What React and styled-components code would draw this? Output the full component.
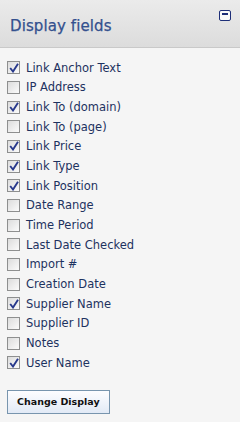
import React, { useState } from 'react';
import styled, { createGlobalStyle } from 'styled-components';

const GlobalStyle = createGlobalStyle`
  html, body {
    margin: 0;
    padding: 0;
    background: #f5f5f5;
  }
`;

const Panel = styled.div`
  width: 240px;
  min-height: 422px;
  background: #f5f5f5;
  font-family: "DejaVu Sans", Tahoma, sans-serif;
`;

const Header = styled.div`
  height: 47px;
  display: flex;
  align-items: flex-start;
  justify-content: space-between;
  padding: 0 9px 0 10px;
  background: linear-gradient(#ebebeb, #dcdcdc);
  border-bottom: 1px solid #c9c9c9;
  box-sizing: content-box;
`;

const Title = styled.h2`
  margin: 17px 0 0;
  font-size: 15px;
  font-weight: normal;
  color: #33508e;
  letter-spacing: 0.1px;
  -webkit-text-stroke: 0.25px #33508e;
`;

const Collapse = styled.button`
  margin-top: 10px;
  width: 12px;
  height: 11px;
  padding: 0;
  border: 1px solid #1e2f78;
  border-radius: 2px;
  background: #fafafa;
  display: flex;
  justify-content: center;
  cursor: pointer;

  &::after {
    content: '';
    margin-top: 2px;
    width: 6px;
    height: 2px;
    background: #1e2f78;
  }
`;

const List = styled.div`
  padding: 10px 0 0 7px;
  display: flex;
  flex-direction: column;
`;

const Row = styled.label`
  height: 19.67px;
  display: flex;
  align-items: center;
  gap: 6px;
  font-size: 11.5px;
  color: #1d3260;
  cursor: pointer;
`;

const Box = styled.span`
  width: 11px;
  height: 11px;
  border: 1px solid #8e8f8f;
  background: linear-gradient(135deg, #dcdcdc, #fbfbfb);
  display: flex;
  align-items: center;
  justify-content: center;
  flex-shrink: 0;
`;

const Button = styled.button`
  margin: 17px 0 0 7px;
  height: 24px;
  padding: 0 9px;
  border: 1px solid #7895ae;
  background: linear-gradient(#fdfdff, #e2eaf6);
  font-family: "DejaVu Sans", Tahoma, sans-serif;
  font-size: 9.5px;
  font-weight: bold;
  color: #111;
  cursor: pointer;
`;

const fields = [
  ['Link Anchor Text', true],
  ['IP Address', false],
  ['Link To (domain)', true],
  ['Link To (page)', false],
  ['Link Price', true],
  ['Link Type', true],
  ['Link Position', true],
  ['Date Range', false],
  ['Time Period', false],
  ['Last Date Checked', false],
  ['Import #', false],
  ['Creation Date', false],
  ['Supplier Name', true],
  ['Supplier ID', false],
  ['Notes', false],
  ['User Name', true],
];

const Check = () => (
  <svg width="10" height="10" viewBox="0 0 10 10">
    <path d="M1.2 5 L4 8.5 L9 0.8" fill="none" stroke="#28398c" strokeWidth="1.9" />
  </svg>
);

export default function App() {
  const [state, setState] = useState(fields.map(f => f[1]));
  const toggle = i => setState(s => s.map((v, j) => (j === i ? !v : v)));

  return (
    <Panel>
      <GlobalStyle />
      <Header>
        <Title>Display fields</Title>
        <Collapse aria-label="collapse" />
      </Header>
      <List>
        {fields.map(([name], i) => (
          <Row key={name} onClick={() => toggle(i)}>
            <Box>{state[i] && <Check />}</Box>
            {name}
          </Row>
        ))}
      </List>
      <Button>Change Display</Button>
    </Panel>
  );
}
